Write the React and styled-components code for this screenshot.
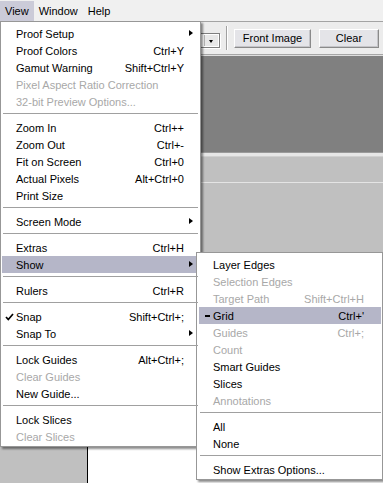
import styled, { createGlobalStyle } from 'styled-components';

const GlobalStyle = createGlobalStyle`
  html, body {
    margin: 0;
    padding: 0;
    background: #ffffff;
  }
  body {
    font-family: "Liberation Sans", Arial, sans-serif;
    font-size: 11px;
    color: #000;
  }
`

const viewMenu = [
  { label: 'Proof Setup', sub: true },
  { label: 'Proof Colors', keys: 'Ctrl+Y' },
  { label: 'Gamut Warning', keys: 'Shift+Ctrl+Y' },
  { label: 'Pixel Aspect Ratio Correction', off: true },
  { label: '32-bit Preview Options...', off: true },
  'sep',
  { label: 'Zoom In', keys: 'Ctrl++' },
  { label: 'Zoom Out', keys: 'Ctrl+-' },
  { label: 'Fit on Screen', keys: 'Ctrl+0' },
  { label: 'Actual Pixels', keys: 'Alt+Ctrl+0' },
  { label: 'Print Size' },
  'sep',
  { label: 'Screen Mode', sub: true },
  'sep',
  { label: 'Extras', keys: 'Ctrl+H' },
  { label: 'Show', sub: true, active: true, open: true },
  'sep',
  { label: 'Rulers', keys: 'Ctrl+R' },
  'sep',
  { label: 'Snap', keys: 'Shift+Ctrl+;', check: true },
  { label: 'Snap To', sub: true },
  'sep',
  { label: 'Lock Guides', keys: 'Alt+Ctrl+;' },
  { label: 'Clear Guides', off: true },
  { label: 'New Guide...' },
  'sep',
  { label: 'Lock Slices' },
  { label: 'Clear Slices', off: true },
]

const showMenu = [
  { label: 'Layer Edges' },
  { label: 'Selection Edges', off: true },
  { label: 'Target Path', keys: 'Shift+Ctrl+H', off: true },
  { label: 'Grid', keys: "Ctrl+'", active: true, dash: true },
  { label: 'Guides', keys: 'Ctrl+;', off: true },
  { label: 'Count', off: true },
  { label: 'Smart Guides' },
  { label: 'Slices' },
  { label: 'Annotations', off: true },
  'sep',
  { label: 'All' },
  { label: 'None' },
  'sep',
  { label: 'Show Extras Options...' },
]

const CheckMark = () => (
  <svg width="9" height="8" viewBox="0 0 9 8">
    <path d="M1 4 L3.3 6.5 L8 1" fill="none" stroke="#000" strokeWidth="1.7" />
  </svg>
)

const MenuList = ({ items, tail, children }) => (
  <>
    {items.map((it, i) =>
      it === 'sep' ? (
        <Separator key={i} />
      ) : (
        <Row key={i} $active={it.active} $off={it.off} $tail={tail}>
          {it.check && <Mark><CheckMark /></Mark>}
          {it.dash && <Dash />}
          <span>{it.label}</span>
          {it.keys && <Keys>{it.keys}</Keys>}
          {it.sub && <Arrow />}
          {it.open && children}
        </Row>
      )
    )}
  </>
)

const App = () => {
  return (
    <Page>
      <GlobalStyle />
      <MenuBar>
        <MenuTitle $active>View</MenuTitle>
        <MenuTitle>Window</MenuTitle>
        <MenuTitle>Help</MenuTitle>
      </MenuBar>
      <Toolbar>
        <Combo>
          <ComboButton />
        </Combo>
        <ToolSep />
        <Button $w={77}>Front Image</Button>
        <Button $w={60} $gap={8}>Clear</Button>
      </Toolbar>
      <Workspace>
        <DarkArea />
        <LightStrip />
        <GrayPanel>
          <PanelHeader />
        </GrayPanel>
        <BottomPanel>
          <SideColumn />
          <Sheet />
        </BottomPanel>
      </Workspace>

      <Dropdown>
        <MenuList items={viewMenu} tail={14}>
          <Submenu>
            <MenuList items={showMenu} tail={17} />
          </Submenu>
        </MenuList>
      </Dropdown>
    </Page>
  )
}

export default App;

const Page = styled.div`
  position: relative;
  display: flex;
  flex-direction: column;
  width: 383px;
  height: 483px;
  overflow: hidden;
  background: #fff;
`

const MenuBar = styled.div`
  display: flex;
  align-items: stretch;
  height: 21px;
  background: #f0f0f0;
  border-bottom: 1px solid #a3a3a3;
  font-size: 11px;
`

const MenuTitle = styled.div`
  display: flex;
  align-items: center;
  padding: 0 5px;
  margin-top: 1px;
  background: ${p => (p.$active ? '#cbcbd8' : 'transparent')};
`

const Toolbar = styled.div`
  display: flex;
  align-items: center;
  justify-content: flex-end;
  height: 32px;
  padding-right: 4px;
  background: #ececec;
  border-bottom: 1px solid #a6a6a6;
`

const Combo = styled.div`
  position: relative;
  width: 60px;
  height: 13px;
  margin-top: 4px;
  background: #fff;
  border: 1px solid #7f7f7f;
  box-shadow: 1px 1px 0 #ffffff;
`

const ComboButton = styled.div`
  position: absolute;
  right: 1px;
  top: 1px;
  width: 13px;
  height: 11px;
  background: #e8e8e8;
  border-left: 1px solid #b5b5b5;

  &::after {
    content: '';
    position: absolute;
    left: 4px;
    top: 5px;
    border-left: 2.5px solid transparent;
    border-right: 2.5px solid transparent;
    border-top: 3px solid #000;
  }
`

const ToolSep = styled.div`
  width: 1px;
  height: 24px;
  margin: 0 6px 0 6px;
  background: #a0a0a0;
  border-right: 1px solid #fff;
`

const Button = styled.div`
  display: flex;
  align-items: center;
  justify-content: center;
  box-sizing: border-box;
  width: ${p => p.$w}px;
  height: 19px;
  margin-left: ${p => p.$gap || 0}px;
  background: #e4e4e8;
  border-top: 1px solid #ffffff;
  border-left: 1px solid #ffffff;
  border-right: 1px solid #8a8a8a;
  border-bottom: 1px solid #8a8a8a;
  box-shadow: inset -1px -1px 0 #c4c4c8;
  font-size: 11px;
`

const Workspace = styled.div`
  flex: 1;
  display: flex;
  flex-direction: column;
  border-top: 1px solid #dedede;
`

const DarkArea = styled.div`
  height: 96px;
  background: #808080;
  border-bottom: 1px solid #9a9a9a;
`

const LightStrip = styled.div`
  height: 3px;
  background: #e6e6e6;
  border-bottom: 1px solid #d0d0d0;
`

const GrayPanel = styled.div`
  height: 170px;
  background: #c0c0c0;
`

const PanelHeader = styled.div`
  height: 25px;
  border-bottom: 1px solid #e4e4e4;
`

const BottomPanel = styled.div`
  flex: 1;
  display: flex;
`

const SideColumn = styled.div`
  width: 87px;
  background: #c0c0c0;
  border-right: 1px solid #000;
`

const Sheet = styled.div`
  flex: 1;
  background: #fff;
`

const Dropdown = styled.div`
  position: absolute;
  left: 0;
  top: 21px;
  width: 201px;
  box-sizing: border-box;
  padding: 3px 2px 1px 1px;
  background: #fff;
  border: 1px solid #979797;
  box-shadow: 2px 2px 2px rgba(0, 0, 0, 0.45);
`

const Submenu = styled.div`
  position: absolute;
  left: 194px;
  top: -4px;
  width: 187px;
  box-sizing: border-box;
  padding: 3px 1px 1px 2px;
  background: #fff;
  border: 1px solid #979797;
  box-shadow: 2px 2px 2px rgba(0, 0, 0, 0.45);
  color: #000;
`

const Row = styled.div`
  position: relative;
  display: flex;
  align-items: center;
  height: 17px;
  padding: 0 ${p => p.$tail}px 0 14px;
  white-space: nowrap;
  color: ${p => (p.$off ? '#a8a8a8' : '#000')};
  background: ${p => (p.$active ? '#b5b6c8' : 'transparent')};
`

const Keys = styled.span`
  margin-left: auto;
`

const Arrow = styled.span`
  position: absolute;
  right: 5px;
  top: 5px;
  border-left: 4px solid #000;
  border-top: 3.5px solid transparent;
  border-bottom: 3.5px solid transparent;
`

const Mark = styled.span`
  position: absolute;
  left: 3px;
  top: 5px;
  display: flex;
`

const Dash = styled.span`
  position: absolute;
  left: 6px;
  top: 8px;
  width: 5px;
  height: 2px;
  background: #000;
`

const Separator = styled.div`
  height: 9px;
  position: relative;

  &::after {
    content: '';
    position: absolute;
    left: 1px;
    right: 0;
    top: 3px;
    height: 1px;
    background: #a0a0a0;
  }
`
